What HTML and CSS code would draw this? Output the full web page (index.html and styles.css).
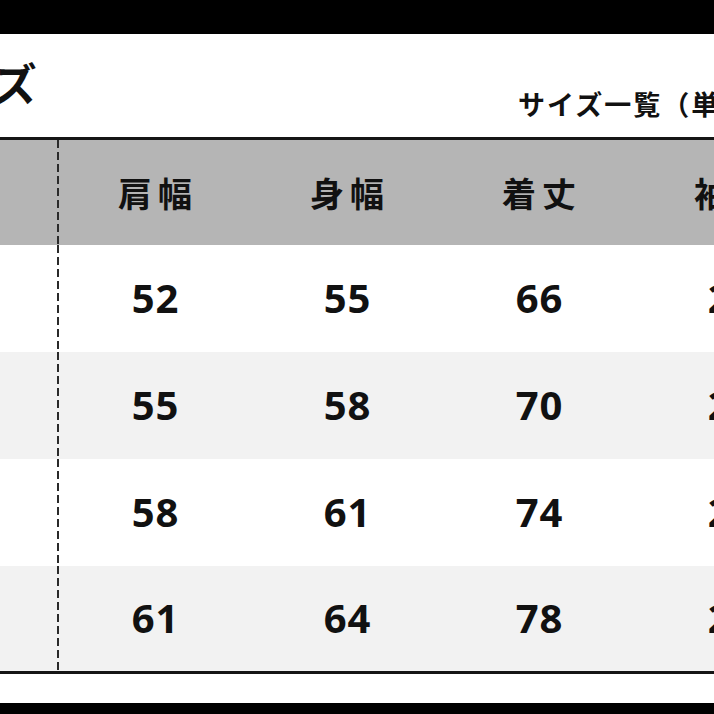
FILE: index.html
```html
<!DOCTYPE html>
<html lang="ja">
<head>
<meta charset="utf-8">
<link rel="stylesheet" href="styles.css">
</head>
<body>
<div class="frame">
  <div class="topbar"></div>
  <div class="titlebar">
    <h1 class="title">サイズ</h1>
    <p class="subtitle">サイズ一覧（単位：cm）</p>
  </div>
  <div class="chart">
    <div class="row head">
      <div class="cell label"></div>
      <div class="cell">肩幅</div>
      <div class="cell">身幅</div>
      <div class="cell">着丈</div>
      <div class="cell">袖丈</div>
    </div>
    <div class="row">
      <div class="cell label">S</div>
      <div class="cell num">52</div>
      <div class="cell num">55</div>
      <div class="cell num">66</div>
      <div class="cell num">21</div>
    </div>
    <div class="row alt">
      <div class="cell label">M</div>
      <div class="cell num">55</div>
      <div class="cell num">58</div>
      <div class="cell num">70</div>
      <div class="cell num">22</div>
    </div>
    <div class="row">
      <div class="cell label">L</div>
      <div class="cell num">58</div>
      <div class="cell num">61</div>
      <div class="cell num">74</div>
      <div class="cell num">23</div>
    </div>
    <div class="row alt last">
      <div class="cell label">XL</div>
      <div class="cell num">61</div>
      <div class="cell num">64</div>
      <div class="cell num">78</div>
      <div class="cell num">24</div>
    </div>
  </div>
  <div class="spacer"></div>
  <div class="bottombar"></div>
</div>
</body>
</html>
```

FILE: styles.css
```css
html, body {
  margin: 0;
  padding: 0;
  background: #ffffff;
}
body {
  width: 714px;
  height: 714px;
  overflow: hidden;
}
.frame {
  width: 714px;
  height: 714px;
  overflow: hidden;
  display: flex;
  flex-direction: column;
  font-family: "Noto Sans CJK JP", "Noto Sans", sans-serif;
  color: #111111;
}
.topbar {
  height: 34px;
  background: #000000;
  flex-shrink: 0;
}
.titlebar {
  height: 103px;
  flex-shrink: 0;
  display: flex;
  align-items: flex-start;
  white-space: nowrap;
}
.title {
  margin: 22px 0 0 -94px;
  font-size: 44px;
  line-height: 1.2;
  font-weight: 700;
  width: 132px;
  flex-shrink: 0;
}
.subtitle {
  margin: 54px 0 0 480px;
  font-size: 27px;
  line-height: 1.2;
  font-weight: 700;
  letter-spacing: 2px;
  flex-shrink: 0;
}
.chart {
  border-top: 3px solid #151515;
  border-bottom: 3px solid #151515;
  flex-shrink: 0;
  width: 826px;
}
.row {
  display: grid;
  grid-template-columns: 59px repeat(4, 192px);
  height: 107px;
  background: #ffffff;
}
.row.head {
  height: 105px;
  background: #b5b5b5;
}
.row.alt {
  background: #f2f2f2;
}
.row.last {
  height: 105px;
}
.cell {
  display: flex;
  align-items: center;
  justify-content: center;
  font-size: 34px;
  font-weight: 700;
  letter-spacing: 6px;
  padding-left: 6px;
}
.cell.label {
  color: transparent;
  background-image: repeating-linear-gradient(to bottom, #2a2a2a 0 8px, transparent 8px 12px);
  background-size: 2px 100%;
  background-position: right top;
  background-repeat: no-repeat;
  padding-left: 0;
}
.cell.num {
  font-family: "Open Sans", "Noto Sans", sans-serif;
  font-size: 40px;
  font-weight: 700;
  letter-spacing: 1px;
  padding-left: 1px;
  padding-bottom: 2px;
}
.spacer {
  height: 29px;
  flex-shrink: 0;
}
.bottombar {
  flex: 1;
  background: #000000;
}
```
